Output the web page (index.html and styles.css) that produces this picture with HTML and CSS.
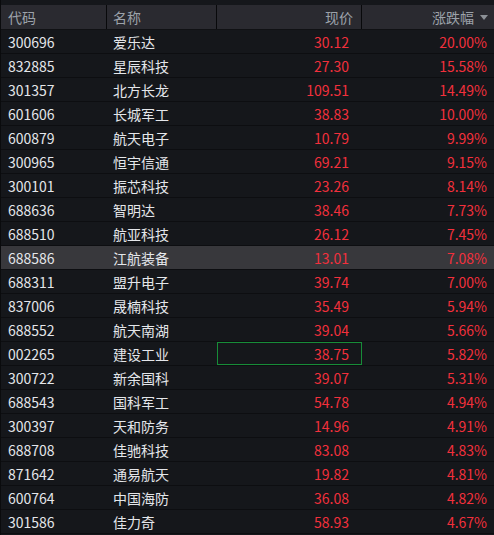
FILE: index.html
```html
<!DOCTYPE html>
<html lang="zh-CN">
<head>
  <meta charset="UTF-8">
  <title>行情列表</title>
  <link rel="stylesheet" href="styles.css">
</head>
<body>
  <div class="board">
    <div class="row head">
      <div class="cell code">代码</div>
      <div class="cell name">名称</div>
      <div class="cell price">现价</div>
      <div class="cell pct">涨跌幅<span class="sort"></span></div>
    </div>
    <div id="rows"></div>
  </div>

  <script>
    const stocks = [
      ['300696', '爱乐达', '30.12', '20.00%'],
      ['832885', '星辰科技', '27.30', '15.58%'],
      ['301357', '北方长龙', '109.51', '14.49%'],
      ['601606', '长城军工', '38.83', '10.00%'],
      ['600879', '航天电子', '10.79', '9.99%'],
      ['300965', '恒宇信通', '69.21', '9.15%'],
      ['300101', '振芯科技', '23.26', '8.14%'],
      ['688636', '智明达', '38.46', '7.73%'],
      ['688510', '航亚科技', '26.12', '7.45%'],
      ['688586', '江航装备', '13.01', '7.08%'],
      ['688311', '盟升电子', '39.74', '7.00%'],
      ['837006', '晟楠科技', '35.49', '5.94%'],
      ['688552', '航天南湖', '39.04', '5.66%'],
      ['002265', '建设工业', '38.75', '5.82%'],
      ['300722', '新余国科', '39.07', '5.31%'],
      ['688543', '国科军工', '54.78', '4.94%'],
      ['300397', '天和防务', '14.96', '4.91%'],
      ['688708', '佳驰科技', '83.08', '4.83%'],
      ['871642', '通易航天', '19.82', '4.81%'],
      ['600764', '中国海防', '36.08', '4.82%'],
      ['301586', '佳力奇', '58.93', '4.67%']
    ];

    const rows = document.getElementById('rows');
    stocks.forEach(s => {
      const div = document.createElement('div');
      div.className = 'row';
      if (s[0] === '688586') div.classList.add('selected');
      const priceClass = s[0] === '002265' ? 'cell price focus' : 'cell price';
      div.innerHTML = `<div class="cell code">${s[0]}</div>
        <div class="cell name">${s[1]}</div>
        <div class="${priceClass}">${s[2]}</div>
        <div class="cell pct">${s[3]}</div>`;
      rows.appendChild(div);
    });
  </script>
</body>
</html>
```

FILE: styles.css
```css
body {
  margin: 0;
  background: #15171b;
  font-family: "Noto Sans CJK SC", sans-serif;
  font-size: 14px;
}

.board {
  width: 494px;
  height: 535px;
  overflow: hidden;
  padding-top: 5px;
  box-sizing: border-box;
  background: #15171b;
  border-left: 1px solid #0a0b0d;
}

.row {
  display: grid;
  grid-template-columns: 106px 110px 145px 1fr;
  height: 24px;
  box-sizing: border-box;
  border-bottom: 1px solid #0d0e11;
  color: #e4e6ea;
}

.row.head {
  height: 25px;
  background: #2a2a30;
  color: #9ca2aa;
  border-bottom: 1px solid #101114;
}

.row.head .cell {
  border-right: 1px solid #08090b;
}

.row.head .cell.pct {
  border-right: none;
}

.row.selected {
  background: #38383c;
}

.cell {
  display: flex;
  align-items: center;
  white-space: nowrap;
  box-sizing: border-box;
}

.code {
  padding-left: 7px;
}

.name {
  padding-left: 6px;
}

.price {
  justify-content: flex-end;
  padding-right: 13px;
  color: #f2303c;
}

.pct {
  justify-content: flex-end;
  padding-right: 7px;
  color: #f2303c;
}

.head .price {
  color: #9ca2aa;
  padding-right: 8px;
}

.head .pct {
  color: #9ca2aa;
  padding-right: 6px;
}

.price.focus {
  border: 1px solid #178c38;
  padding-right: 12px;
  height: 23px;
}

.sort {
  width: 0;
  height: 0;
  margin-left: 6px;
  margin-top: 1px;
  border-left: 4px solid transparent;
  border-right: 4px solid transparent;
  border-top: 5px solid #8c9096;
}
```
